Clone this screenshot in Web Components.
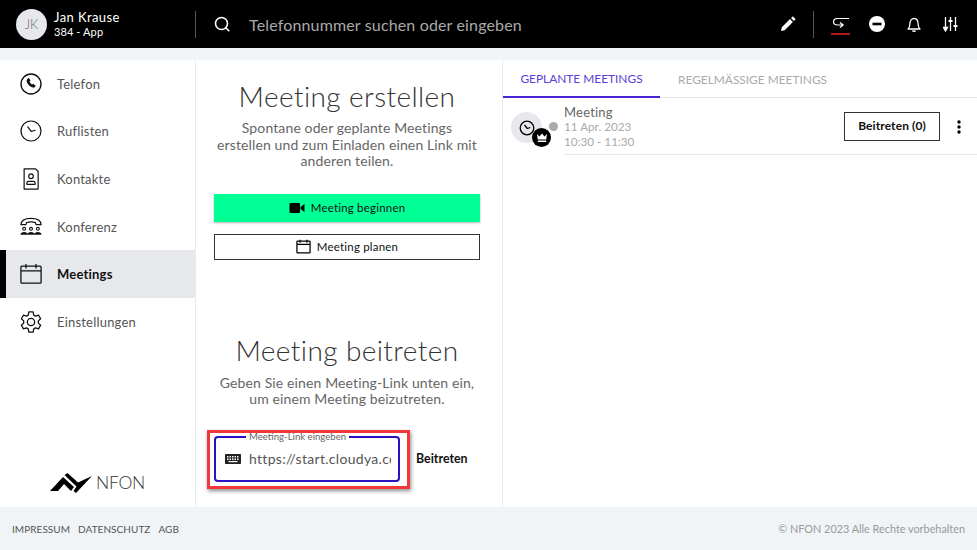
<!DOCTYPE html>
<html lang="de">
<head>
<meta charset="utf-8">
<title>Meetings</title>
<style>
  html, body { margin: 0; height: 100%; }
  body { font-family: Lato, "Liberation Sans", sans-serif; color: #333; overflow: hidden; }
</style>
</head>
<body>
<app-shell>
  <app-header slot="header"></app-header>
  <side-nav slot="nav"></side-nav>
  <meeting-panel slot="center"></meeting-panel>
  <meeting-list slot="right"></meeting-list>
  <app-footer slot="footer"></app-footer>
</app-shell>

<script>
const ICONS = {
  phone: `<svg width="22" height="22" viewBox="0 0 24 24" fill="none"><circle cx="12" cy="12" r="10.9" stroke="#111" stroke-width="1.5"/><path d="M8.2 6.2l1.6-.8 1.7 2.9-1.1 1c.5 1.3 1.4 2.4 2.7 3.2l1.2-.9 2.9 2.2-1 1.5c-.5.6-1.2.8-2 .6-3.7-1-6.5-4-7-7.5-.1-.8.2-1.5 1-2.2z" fill="#111"/></svg>`,
  clock: `<svg width="22" height="22" viewBox="0 0 24 24" fill="none"><circle cx="12" cy="12" r="10.9" stroke="#111" stroke-width="1.3"/><path d="M8.5 7.5l3.7 5 4.3-1.3" stroke="#111" stroke-width="1.3" stroke-linecap="round" stroke-linejoin="round"/></svg>`,
  contact: `<svg width="22" height="22" viewBox="0 0 24 24" fill="none"><path d="M4.5 1h12.5l2.8 2.8V23H4.5z" stroke="#111" stroke-width="1.3" stroke-linejoin="round"/><circle cx="12" cy="9" r="2.5" stroke="#111" stroke-width="1.3"/><path d="M7.5 17.8v-1.5c0-1 .8-1.8 1.8-1.8h5.400c1 0 1.800.8 1.800 1.800v1.500z" stroke="#111" stroke-width="1.3" stroke-linejoin="round"/></svg>`,
  conf: `<svg width="22" height="22" viewBox="0 0 24 24" fill="none"><path d="M1 9.5c.2-5 5.500-7 11-7s10.800 2 11 7h-5.500l-.6-2.300c-3-1-6.800-1-9.800 0l-.6 2.300z" stroke="#111" stroke-width="1.3" stroke-linejoin="round"/><g stroke="#111" stroke-width="1.2"><circle cx="4.5" cy="14" r="1.6"/><circle cx="12" cy="14" r="1.6"/><circle cx="19.5" cy="14" r="1.6"/></g><g fill="#111"><path d="M.5 20.500c0-2 1.800-3 4-3s4 1 4 3z"/><path d="M8 20.500c0-2 1.800-3 4-3s4 1 4 3z"/><path d="M15.500 20.500c0-2 1.800-3 4-3s4 1 4 3z"/></g></svg>`,
  calendar: `<svg width="22" height="22" viewBox="0 0 24 24" fill="none"><rect x="1" y="3.5" width="22" height="18.5" rx="1" stroke="currentColor" stroke-width="1.4"/><path d="M1 8.5h22M6.5 1v5M17.5 1v5" stroke="currentColor" stroke-width="1.4"/></svg>`,
  gear: `<svg width="22" height="22" viewBox="0 0 24 24" fill="none" stroke="#111" stroke-width="1.4" stroke-linejoin="round"><circle cx="12" cy="12" r="4"/><path d="M9.7 1h4.600l.7 3.500 1.900 1.100 3.300-1.100 2.300 4-2.500 2.300v2.400l2.500 2.300-2.300 4-3.300-1.100-1.900 1.100-.7 3.500H9.700L9 19.500l-1.900-1.100-3.300 1.100-2.300-4 2.500-2.300v-2.400L1.500 8.500l2.300-4 3.300 1.100L9 4.500z"/></svg>`
};

class AppShell extends HTMLElement {
  constructor() {
    super();
    this.attachShadow({ mode: 'open' });
    this.shadowRoot.innerHTML = `
      <style>
        :host { display: grid; height: 550px; grid-template-rows: 48px 1fr 43px; background: #f0f4f7; }
        .main { display: grid; grid-template-columns: 196px 307px 1fr; padding-top: 12px; min-height: 0; }
        .main ::slotted(*) { background: #fff; }
      </style>
      <slot name="header"></slot>
      <div class="main">
        <slot name="nav"></slot>
        <slot name="center"></slot>
        <slot name="right"></slot>
      </div>
      <slot name="footer"></slot>
    `;
  }
}

class AppHeader extends HTMLElement {
  constructor() {
    super();
    this.attachShadow({ mode: 'open' });
    this.shadowRoot.innerHTML = `
      <style>
        :host { display: flex; align-items: center; background: #000; color: #fff; height: 48px; }
        .user { width: 195px; box-sizing: border-box; padding-left: 16px; display: flex; align-items: center; gap: 7px; }
        .avatar { width: 31px; height: 31px; border-radius: 50%; background: #e6e8eb; color: #666; font-size: 13px; font-weight: 300; display: flex; align-items: center; justify-content: center; }
        .name { font-size: 13px; line-height: 15px; letter-spacing: .4px; white-space: nowrap; }
        .ext { font-size: 11px; line-height: 13px; letter-spacing: .1px; white-space: nowrap; }
        .sep { width: 1px; height: 27px; background: #555; flex: none; }
        .search { flex: 1; min-width: 0; display: flex; align-items: center; padding-left: 18px; gap: 19px; font-size: 16px; color: #aaa; letter-spacing: .15px; white-space: nowrap; }
        .tools { display: flex; align-items: center; height: 100%; padding-right: 19px; }
        .tools svg { display: block; flex: none; }
        .pen { margin-right: 17px; }
        .redir { margin: 0 19px 0 17px; }
        .minus { margin-right: 22px; }
        .bell { margin-right: 22px; }
      </style>
      <div class="user">
        <div class="avatar">JK</div>
        <div><div class="name">Jan Krause</div><div class="ext">384 - App</div></div>
      </div>
      <div class="sep"></div>
      <div class="search">
        <svg width="16" height="16" viewBox="0 0 16 16" fill="none" stroke="#fff" stroke-width="1.6"><circle cx="7.5" cy="7.5" r="6"/><path d="M11.8 11.8l3 3" stroke-linecap="round"/></svg>
        <span>Telefonnummer suchen oder eingeben</span>
      </div>
      <div class="tools">
        <svg class="pen" width="16" height="16" viewBox="0 0 16 16" fill="#fff"><path d="M1 15l.8-3.700L10 3.100l2.900 2.900-8.200 8.200zM11 2.100l1.200-1.200c.4-.4.900-.4 1.300 0l1.600 1.600c.4.4.4.9 0 1.300L13.900 5z"/></svg>
        <div class="sep"></div>
        <svg class="redir" width="19" height="24" viewBox="0 0 19 24" fill="none"><path d="M18 6.500H6.500c-2.500 0-4 1.400-4 3.300s1.500 3.200 4 3.200H12M9 10.500L12.200 13 9 15.500" stroke="#fff" stroke-width="1.2" stroke-linejoin="round"/><path d="M0 22h19" stroke="#e02020" stroke-width="1.6"/></svg>
        <svg class="minus" width="16" height="16" viewBox="0 0 16 16"><circle cx="8" cy="8" r="8" fill="#fff"/><rect x="3.5" y="6.7" width="9" height="2.6" fill="#000"/></svg>
        <svg class="bell" width="14" height="15" viewBox="0 0 14 15" fill="none" stroke="#fff" stroke-width="1.3" stroke-linejoin="round"><path d="M1 12c1.300-1 1.800-2 1.800-4.500C2.800 4 4.500 1.500 7 1.500s4.200 2.500 4.200 6c0 2.500.5 3.500 1.800 4.500z"/><path d="M5.500 13.500c.3 1 2.700 1 3 0"/></svg>
        <svg width="15" height="16" viewBox="0 0 15 16" fill="none" stroke="#fff" stroke-width="1.3"><path d="M2.500 1v12M7.500 1v14M12.500 1v14"/><path d="M.5 11.500L2.500 15l2-3.500z" fill="#fff"/><path d="M5.500 5h4M10.500 10h4" stroke-width="1.8"/></svg>
      </div>
    `;
  }
}

class NavItem extends HTMLElement {
  constructor() {
    super();
    this.attachShadow({ mode: 'open' });
    const icon = ICONS[this.getAttribute('icon')] || '';
    this.shadowRoot.innerHTML = `
      <style>
        :host { display: flex; align-items: center; height: 47.6px; box-sizing: border-box; padding-left: 20px; gap: 15px; font-size: 13px; color: #555; letter-spacing: .2px; }
        :host([active]) { background: #e6e8eb; border-left: 6px solid #000; padding-left: 14px; color: #111; font-weight: 700; }
        svg { display: block; color: #111; flex: none; }
      </style>
      ${icon}
      <slot></slot>
    `;
  }
}

class SideNav extends HTMLElement {
  constructor() {
    super();
    this.attachShadow({ mode: 'open' });
    this.shadowRoot.innerHTML = `
      <style>
        :host { display: flex; flex-direction: column; border-right: 1px solid #e9ecef; }
        nav { flex: 1; }
        .logo { display: flex; align-items: center; justify-content: center; gap: 4px; padding-bottom: 14px; font-size: 17.5px; font-weight: 300; color: #333; letter-spacing: -.2px; }
      </style>
      <nav>
        <nav-item icon="phone">Telefon</nav-item>
        <nav-item icon="clock">Ruflisten</nav-item>
        <nav-item icon="contact">Kontakte</nav-item>
        <nav-item icon="conf">Konferenz</nav-item>
        <nav-item icon="calendar" active>Meetings</nav-item>
        <nav-item icon="gear">Einstellungen</nav-item>
      </nav>
      <div class="logo">
        <svg width="42" height="20" viewBox="0 0 42 20" fill="#000"><path d="M0 18L13 4l11 10-3 4-7-7-6 7z"/><path d="M14.5 2L17.5 0 28 9.5 42 3 26 20l-2.500-2 3-4.500z"/></svg>
        <span>NFON</span>
      </div>
    `;
  }
}

class MeetingPanel extends HTMLElement {
  constructor() {
    super();
    this.attachShadow({ mode: 'open' });
    this.shadowRoot.innerHTML = `
      <style>
        :host { display: block; border-right: 1px solid #e9ecef; padding: 0 22px 0 18px; position: relative; text-align: center; }
        h2 { font-size: 28px; font-weight: 300; margin: 0; color: #333; line-height: 34px; letter-spacing: .4px; }
        p { margin: 0; font-size: 14px; line-height: 16.5px; color: #666; letter-spacing: .12px; }
        .create h2 { padding-top: 19px; margin-bottom: 7px; }
        .btn { display: flex; align-items: center; justify-content: center; box-sizing: border-box; width: 266px; font-size: 11.5px; color: #111; gap: 6px; letter-spacing: .2px; }
        .go { height: 28px; background: #00ff95; box-shadow: 0 1px 2px rgba(0,0,0,.3); margin-top: 24px; }
        .plan { height: 26px; background: #fff; border: 1px solid #333; margin-top: 12px; }
        .join { padding-top: 73px; }
        .join h2 { margin-bottom: 8px; }
        .join-row { display: flex; align-items: center; margin-top: 28px; position: relative; }
        .field { width: 186px; height: 46px; box-sizing: border-box; border: 2px solid #2a12c0; border-radius: 4px; display: flex; align-items: center; position: relative; padding-left: 9px; gap: 8px; flex: none; }
        .legend { position: absolute; top: -7px; left: 30px; background: #fff; padding: 0 3px; font-size: 9.6px; line-height: 11px; color: #666; white-space: nowrap; }
        .url { font-size: 14px; color: #555; width: 142px; overflow: hidden; white-space: nowrap; letter-spacing: .3px; text-align: left; }
        .go-link { margin-left: 16px; font-size: 12.4px; font-weight: 700; color: #111; }
        .mark { position: absolute; left: -7px; top: -6px; width: 203px; height: 59px; box-sizing: border-box; border: 3px solid #f0383c; box-shadow: 1px 2px 4px rgba(0,0,0,.45); }
      </style>
      <section class="create">
        <h2>Meeting erstellen</h2>
        <p>Spontane oder geplante Meetings<br>erstellen und zum Einladen einen Link mit<br>anderen teilen.</p>
        <div class="btn go">
          <svg width="16" height="10" viewBox="0 0 15 10" fill="#000"><rect width="10.5" height="10" rx="1"/><path d="M11 4l4-3v8l-4-3z"/></svg>
          <span>Meeting beginnen</span>
        </div>
        <div class="btn plan">
          <svg width="15" height="15" viewBox="0 0 24 24" fill="none" style="color:#000">
            <rect x="1.5" y="3.5" width="21" height="18.5" rx="1" stroke="currentColor" stroke-width="2"/><path d="M1.5 8.5h21M6.5 1v5M17.5 1v5" stroke="currentColor" stroke-width="2"/>
          </svg>
          <span>Meeting planen</span>
        </div>
      </section>
      <section class="join">
        <h2>Meeting beitreten</h2>
        <p>Geben Sie einen Meeting-Link unten ein,<br>um einem Meeting beizutreten.</p>
        <div class="join-row">
          <div class="field">
            <span class="legend">Meeting-Link eingeben</span>
            <svg width="16" height="10" viewBox="0 0 16 10" fill="#222"><path d="M0 1c0-.6.4-1 1-1h14c.6 0 1 .4 1 1v8c0 .6-.4 1-1 1H1c-.6 0-1-.4-1-1z"/><g fill="#fff"><rect x="2" y="2" width="1.5" height="1.5"/><rect x="4.5" y="2" width="1.5" height="1.5"/><rect x="7" y="2" width="1.5" height="1.5"/><rect x="9.5" y="2" width="1.5" height="1.5"/><rect x="12" y="2" width="1.5" height="1.5"/><rect x="2" y="4.5" width="1.5" height="1.5"/><rect x="4.5" y="4.5" width="1.5" height="1.5"/><rect x="7" y="4.5" width="1.5" height="1.5"/><rect x="9.5" y="4.5" width="1.5" height="1.5"/><rect x="12" y="4.5" width="1.5" height="1.5"/><rect x="3.5" y="7" width="9" height="1.2"/></g></svg>
            <span class="url">https://start.cloudya.cc</span>
          </div>
          <span class="go-link">Beitreten</span>
          <div class="mark"></div>
        </div>
      </section>
    `;
  }
}

class MeetingList extends HTMLElement {
  constructor() {
    super();
    this.attachShadow({ mode: 'open' });
    this.shadowRoot.innerHTML = `
      <style>
        :host { display: block; }
        .tabs { display: flex; height: 38px; border-bottom: 1px solid #e6e8eb; font-size: 11.9px; box-sizing: border-box; white-space: nowrap; }
        .tab { display: flex; align-items: center; justify-content: center; color: #aaa; height: 38px; box-sizing: border-box; padding: 1px 18px 0; }
        .tab.on { width: 157px; padding: 1px 0 0; color: #5b3ddb; border-bottom: 2px solid #4a25cf; }
        .row { display: flex; align-items: flex-start; height: 57px; padding-left: 8px; position: relative; }
        .badge { position: relative; width: 31px; height: 31px; border-radius: 50%; background: #e6e8eb; margin-top: 14px; display: flex; align-items: center; justify-content: center; flex: none; }
        .crown { position: absolute; left: 21px; top: 16px; width: 19px; height: 19px; border-radius: 50%; background: #000; display: flex; align-items: center; justify-content: center; }
        .dot { width: 9px; height: 9px; border-radius: 50%; background: #aaa; margin: 24px 0 0 7px; flex: none; }
        .info { flex: 1; margin-left: 6px; height: 57px; border-bottom: 1px solid #e6e8eb; font-size: 11.7px; line-height: 14.5px; color: #aaa; padding-top: 7px; box-sizing: border-box; display: flex; }
        .title { color: #666; font-size: 13px; line-height: 14px; letter-spacing: .2px; }
        .text { flex: 1; }
        .join { width: 96px; height: 29px; box-sizing: border-box; border: 1px solid #333; color: #111; font-size: 12px; font-weight: 700; display: flex; align-items: center; justify-content: center; margin-top: 7px; letter-spacing: .1px; }
        .more { width: 37px; display: flex; justify-content: center; margin-top: 15px; }
      </style>
      <div class="tabs">
        <div class="tab on">GEPLANTE MEETINGS</div>
        <div class="tab">REGELMÄSSIGE MEETINGS</div>
      </div>
      <div class="row">
        <div class="badge">
          <svg width="16" height="16" viewBox="0 0 16 16" fill="none" stroke="#000" stroke-width="1.3"><circle cx="8" cy="8" r="6.8"/><path d="M5.5 5l2.800 3.500 3-1" stroke-linejoin="round"/></svg>
          <span class="crown"><svg width="12" height="10" viewBox="0 0 12 10" fill="#fff"><path d="M1 1l2.500 2.500L6 .5l2.500 3L11 1l-.8 5.500H1.800zM1.800 7.500h8.400V9H1.800z"/></svg></span>
        </div>
        <span class="dot"></span>
        <div class="info">
          <div class="text"><div class="title">Meeting</div><div>11 Apr. 2023</div><div>10:30 - 11:30</div></div>
          <div class="join">Beitreten (0)</div>
          <div class="more"><svg width="4" height="14" viewBox="0 0 4 14" fill="#000"><circle cx="2" cy="2" r="1.7"/><circle cx="2" cy="7" r="1.7"/><circle cx="2" cy="12" r="1.7"/></svg></div>
        </div>
      </div>
    `;
  }
}

class AppFooter extends HTMLElement {
  constructor() {
    super();
    this.attachShadow({ mode: 'open' });
    this.shadowRoot.innerHTML = `
      <style>
        :host { display: flex; align-items: center; justify-content: space-between; padding: 0 12px; background: #f0f4f7; font-size: 10px; color: #555; }
        .links { display: flex; gap: 8px; letter-spacing: .05px; }
        .copy { color: #999; font-size: 10.85px; }
      </style>
      <div class="links"><span>IMPRESSUM</span><span>DATENSCHUTZ</span><span>AGB</span></div>
      <div class="copy">© NFON 2023 Alle Rechte vorbehalten</div>
    `;
  }
}

customElements.define('app-shell', AppShell);
customElements.define('app-header', AppHeader);
customElements.define('nav-item', NavItem);
customElements.define('side-nav', SideNav);
customElements.define('meeting-panel', MeetingPanel);
customElements.define('meeting-list', MeetingList);
customElements.define('app-footer', AppFooter);
</script>
</body>
</html>
